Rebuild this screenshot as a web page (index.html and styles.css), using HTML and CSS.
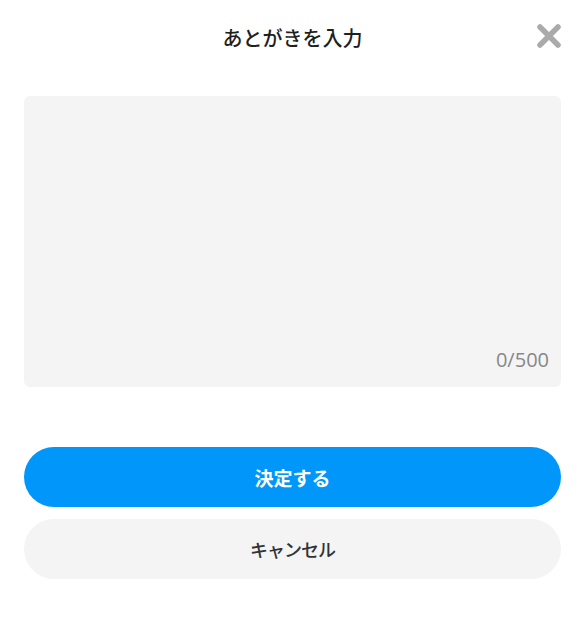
FILE: index.html
```html
<!DOCTYPE html>
<html lang="ja">
<head>
    <meta charset="UTF-8">
    <meta name="viewport" content="width=device-width, initial-scale=1.0">
    <title>あとがきを入力</title>
    <link rel="stylesheet" href="styles.css">
</head>
<body>
    <div class="modal">
        <div class="modal-header">
            <h1 class="modal-title">あとがきを入力</h1>
            <button class="close-btn" type="button" aria-label="閉じる">
                <svg width="24" height="24" viewBox="0 0 24 24">
                    <path d="M3 3 L21 21 M21 3 L3 21" stroke="#aaaaaa" stroke-width="5.5" stroke-linecap="round" fill="none"/>
                </svg>
            </button>
        </div>

        <!-- Afterword input -->
        <div class="note-box">
            <textarea class="note-input" maxlength="500"></textarea>
            <span class="note-count">0/500</span>
        </div>

        <div class="actions">
            <button class="btn btn-primary" type="button">決定する</button>
            <button class="btn btn-secondary" type="button">キャンセル</button>
        </div>
    </div>
</body>
</html>
```

FILE: styles.css
```css
body {
    margin: 0;
    background-color: #fff;
    font-family: "Noto Sans CJK JP", "Noto Sans", sans-serif;
    color: #222;
}

.modal {
    padding: 0 24px;
}

.modal-header {
    position: relative;
    height: 76px;
    display: flex;
    align-items: center;
    justify-content: center;
}

.modal-title {
    margin: 0;
    font-size: 20px;
    font-weight: 500;
    line-height: 1;
    color: #1f1f1f;
}

.close-btn {
    position: absolute;
    right: 0;
    top: 24px;
    width: 24px;
    height: 24px;
    padding: 0;
    border: none;
    background: none;
    cursor: pointer;
}

.close-btn svg {
    display: block;
}

.note-box {
    position: relative;
    margin-top: 20px;
    height: 291px;
    background-color: #f4f4f4;
    border-radius: 6px;
}

.note-input {
    box-sizing: border-box;
    width: 100%;
    height: 100%;
    padding: 12px;
    border: none;
    background: transparent;
    resize: none;
    outline: none;
    font-family: inherit;
    font-size: 16px;
}

.note-count {
    position: absolute;
    right: 12px;
    bottom: 17px;
    font-family: "Open Sans", "Noto Sans", sans-serif;
    font-size: 20px;
    line-height: 1;
    color: #888;
}

.actions {
    margin-top: 60px;
    display: flex;
    flex-direction: column;
    gap: 12px;
}

.btn {
    height: 60px;
    border: none;
    border-radius: 30px;
    font-family: inherit;
    cursor: pointer;
}

.btn-primary {
    background-color: #0096fa;
    color: #fff;
    font-size: 19px;
    font-weight: 700;
}

.btn-secondary {
    background-color: #f4f4f4;
    color: #333;
    font-size: 18px;
    font-weight: 500;
    letter-spacing: -1px;
}
```
